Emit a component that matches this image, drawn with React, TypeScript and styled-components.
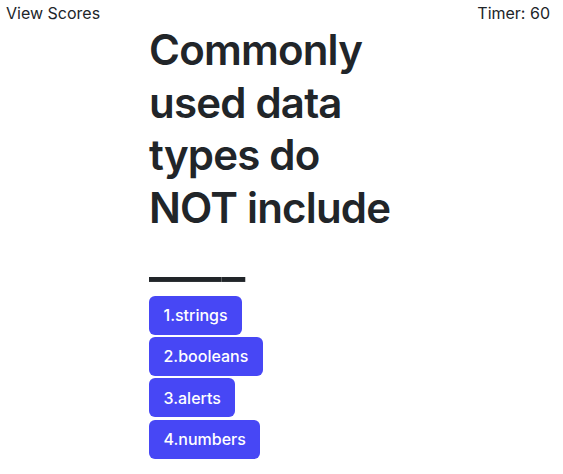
import React from "react";
import styled, { createGlobalStyle } from "styled-components";

const GlobalStyle = createGlobalStyle`
  html, body {
    margin: 0;
    padding: 0;
    background: #ffffff;
  }
  body {
    font-family: Inter, "Noto Sans", "Liberation Sans", sans-serif;
    font-size: 16px;
    line-height: 1.5;
    color: #212529;
  }
  * { box-sizing: border-box; }
`;

const Page = styled.div`
  width: 563px;
  min-height: 474px;
  display: flex;
  flex-direction: column;
`;

const Header = styled.header`
  display: flex;
  justify-content: space-between;
  align-items: flex-start;
  height: 24px;
  padding: 1px 13px 0 6px;
`;

const HeaderLink = styled.span`
  font-size: 16px;
  line-height: 24px;
  color: #212529;
  cursor: pointer;
`;

const Timer = styled.span`
  font-size: 16px;
  line-height: 24px;
  color: #212529;
`;

const Quiz = styled.main`
  width: 265px;
  margin: 0 auto;
  display: flex;
  flex-direction: column;
  align-items: flex-start;
`;

const Question = styled.h1`
  max-width: 250px;
  margin: 0 0 8px;
  font-size: 42px;
  font-weight: 600;
  letter-spacing: -0.8px;
  line-height: 52.7px;
  color: #212529;
`;

const Blank = styled.span`
  display: inline-block;
  letter-spacing: 0;
  transform: translateY(-1px) scale(1.22, 1.15);
  transform-origin: left center;
`;

const Choices = styled.div`
  display: flex;
  flex-direction: column;
  align-items: flex-start;
  gap: 2.33px;
`;

const Choice = styled.button`
  height: 39px;
  padding: 0 14.5px;
  border: none;
  border-radius: 6px;
  background: #4747f5;
  color: #ffffff;
  font-family: Inter, "Noto Sans", "Liberation Sans", sans-serif;
  font-size: 16px;
  font-weight: 500;
  line-height: 24px;
  cursor: pointer;
`;

const choices = ["1.strings", "2.booleans", "3.alerts", "4.numbers"];

export default function App() {
  return (
    <>
      <GlobalStyle />
      <Page>
        <Header>
          <HeaderLink>View Scores</HeaderLink>
          <Timer>Timer: 60</Timer>
        </Header>
        <Quiz>
          <Question>
            Commonly used data types do NOT include <Blank>____</Blank>
          </Question>
          <Choices>
            {choices.map((c) => (
              <Choice key={c}>{c}</Choice>
            ))}
          </Choices>
        </Quiz>
      </Page>
    </>
  );
}
